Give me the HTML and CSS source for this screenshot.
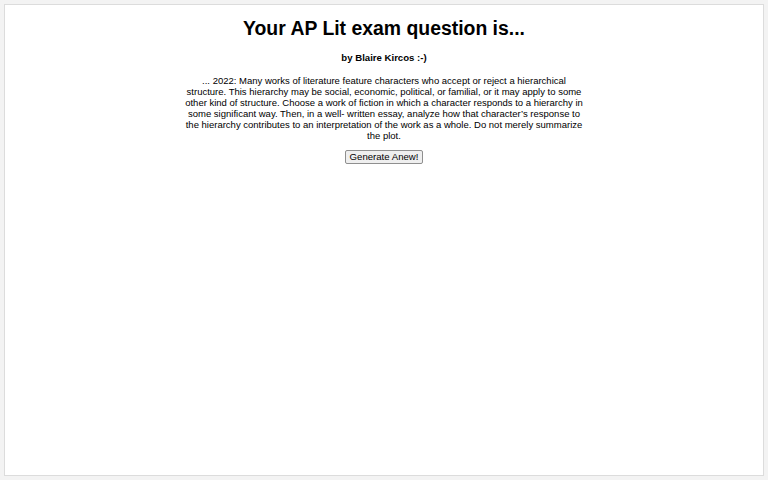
FILE: index.html
```html
<!DOCTYPE html>
<html lang="en">
<head>
<meta charset="utf-8">
<title>AP Lit exam question</title>
<link rel="stylesheet" href="styles.css">
</head>
<body>
<main class="frame">
  <h1 class="title">Your AP Lit exam question is...</h1>
  <p class="byline">by Blaire Kircos :-)</p>
  <p class="question">... 2022: Many works of literature feature characters who accept or reject a hierarchical structure. This hierarchy may be social, economic, political, or familial, or it may apply to some other kind of structure. Choose a work of fiction in which a character responds to a hierarchy in some significant way. Then, in a well- written essay, analyze how that character’s response to the hierarchy contributes to an interpretation of the work as a whole. Do not merely summarize the plot.</p>
  <button class="generate" type="button">Generate Anew!</button>
</main>
</body>
</html>
```
FILE: styles.css
```css
html, body {
  margin: 0;
  height: 100%;
}
body {
  background: #f3f3f3;
  padding: 4px;
  box-sizing: border-box;
  font-family: "Liberation Sans", Arial, sans-serif;
  color: #000;
}
.frame {
  box-sizing: border-box;
  height: 100%;
  background: #fff;
  border: 1px solid #dcdcdc;
  display: flex;
  flex-direction: column;
  align-items: center;
  padding-top: 12px;
}
.title {
  margin: 0;
  font-size: 19.4px;
  line-height: 22px;
  font-weight: bold;
}
.byline {
  margin: 12.5px 0 0;
  font-size: 9.6px;
  line-height: 11px;
  font-weight: bold;
}
.question {
  margin: 13.5px 0 0;
  width: 400px;
  font-size: 9.5px;
  line-height: 10.9px;
  text-align: center;
}
.generate {
  margin-top: 8.5px;
  font-family: "Liberation Sans", Arial, sans-serif;
  font-size: 9.6px;
  line-height: 10px;
  padding: 1px 4px;
  background: #efefef;
  border: 1px solid #8f8f8f;
  border-radius: 2px;
  color: #000;
}
```
